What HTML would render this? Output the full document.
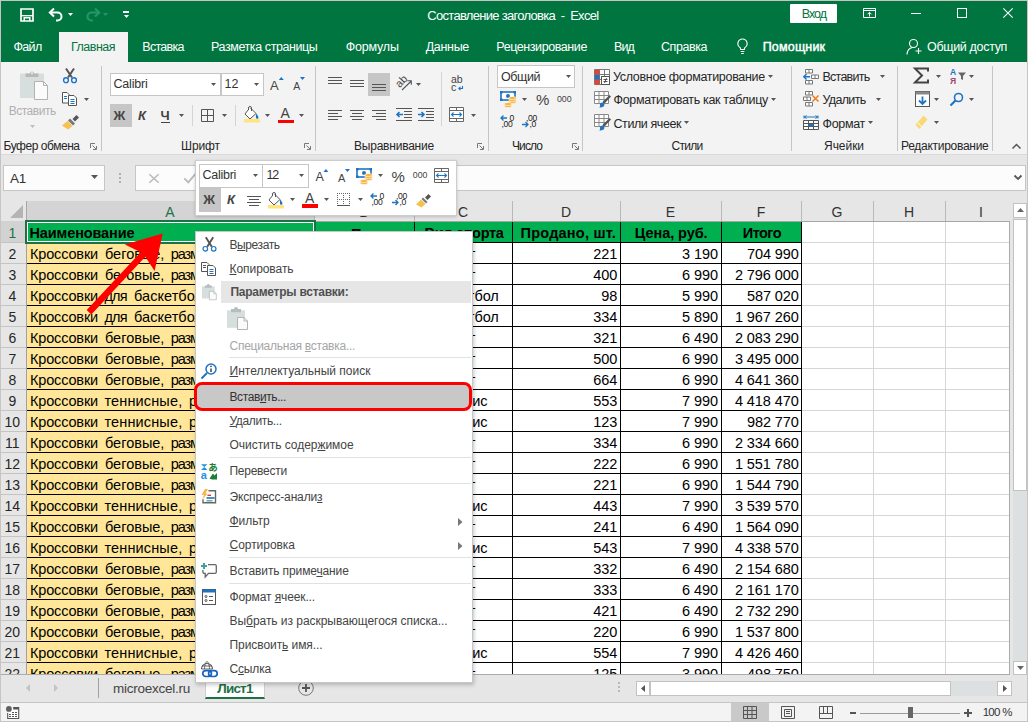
<!DOCTYPE html>
<html lang="ru"><head><meta charset="utf-8"><title>Составление заголовка - Excel</title>
<style>
*{box-sizing:border-box;margin:0;padding:0}
html,body{width:1028px;height:722px;overflow:hidden}
body{position:relative;background:#e6e6e6;font-family:"Liberation Sans",sans-serif;font-size:12px;color:#262626}
.a{position:absolute}
.t{position:absolute;white-space:nowrap;line-height:1}
svg{position:absolute;overflow:visible}
u{text-decoration:underline;text-underline-offset:1px}
#tb{left:0;top:0;width:1028px;height:62px;background:#00753f}
#tb .t{color:#fff;font-size:13px}
#rb{left:0;top:62px;width:1028px;height:92px;background:#f3f3f3}
.sep{position:absolute;width:1px;background:#c6c6c6}
.gl{position:absolute;white-space:nowrap;line-height:1;font-size:12px;color:#333;letter-spacing:.3px}
.dd{position:absolute;width:0;height:0;border-left:3px solid transparent;border-right:3px solid transparent;border-top:3px solid #555}
.box{position:absolute;background:#fff;border:1px solid #c6c6c6}
</style></head><body>
<div id="tb" class="a"><div class="a" style="left:0;top:0;width:1028px;height:1px;background:#c9c3c3"></div><div class="a" style="left:0;top:0;width:1px;height:62px;background:#c9c3c3"></div><svg style="left:20px;top:8px" width="14" height="14" viewBox="0 0 14 14"><path d="M1 1h12v12h-12z" fill="none" stroke="#fff" stroke-width="1.700"/><path d="M1 7.700h12" stroke="#fff" stroke-width="1.300"/><path d="M4.200 13v-3.200h5.600v3.200" fill="none" stroke="#fff" stroke-width="1.500"/></svg><svg style="left:48px;top:7px" width="16" height="15" viewBox="0 0 16 15"><path d="M2 5.500h7.500a4 4 0 0 1 0 8h-1.500" fill="none" stroke="#fff" stroke-width="2"/><path d="M6 1.500l-4.200 4 4.200 4" fill="none" stroke="#fff" stroke-width="2"/></svg><svg style="left:68px;top:13px" width="5" height="3"><path d="M0 0h5l-2.5 3z" fill="#fff"/></svg><svg style="left:85px;top:7px" width="16" height="15" viewBox="0 0 16 15"><path d="M14 5.500h-7.500a4 4 0 0 0 0 8h1.500" fill="none" stroke="#27966a" stroke-width="2.200"/><path d="M10 1.500l4.200 4-4.200 4" fill="none" stroke="#27966a" stroke-width="2.200"/></svg><svg style="left:103px;top:13px" width="5" height="3"><path d="M0 0h5l-2.5 3z" fill="#27966a"/></svg><div class="a" style="left:123px;top:11px;width:6px;height:2px;background:#fff"></div><svg style="left:124px;top:15px" width="5" height="3"><path d="M0 0h5l-2.5 3z" fill="#fff"/></svg><div class="t" style="left:427.3px;top:8.7px;font-size:13px;letter-spacing:-0.71px;color:#fff;white-space:pre;">Составление заголовка  -  Excel</div><div class="a" style="left:790px;top:4px;width:47px;height:19px;background:#fff;border-radius:1px"></div><div class="t" style="left:801.7px;top:7.8px;font-size:12.5px;letter-spacing:-0.94px;color:#00753f;">Вход</div><svg style="left:863px;top:8px" width="13" height="10" viewBox="0 0 13 10"><path d="M.500 .500h12v9h-12z M.500 2.500h12" fill="none" stroke="#fff" stroke-width="1"/><path d="M6.500 8.500v-4 M4.500 6.300l2-2 2 2" fill="none" stroke="#fff" stroke-width="1"/></svg><div class="a" style="left:911px;top:13px;width:10px;height:1px;background:#fff"></div><div class="a" style="left:957px;top:8px;width:10px;height:10px;border:1px solid #fff"></div><svg style="left:1003px;top:8px" width="10" height="10" viewBox="0 0 10 10"><path d="M.300 .300l9.400 9.400 M9.700 .300l-9.400 9.400" stroke="#fff" stroke-width="1.100"/></svg><div class="a" style="left:59px;top:32px;width:69px;height:30px;background:#f3f3f3"></div><div class="t" style="left:13.5px;top:40.8px;font-size:12.5px;letter-spacing:-0.68px;color:#fff;">Файл</div><div class="t" style="left:142.3px;top:40.8px;font-size:12.5px;letter-spacing:-0.71px;color:#fff;">Вставка</div><div class="t" style="left:211.0px;top:40.8px;font-size:12.5px;letter-spacing:-0.41px;color:#fff;">Разметка страницы</div><div class="t" style="left:345.7px;top:40.8px;font-size:12.5px;letter-spacing:-0.20px;color:#fff;">Формулы</div><div class="t" style="left:425.7px;top:40.8px;font-size:12.5px;letter-spacing:-0.31px;color:#fff;">Данные</div><div class="t" style="left:496.3px;top:40.8px;font-size:12.5px;letter-spacing:-0.42px;color:#fff;">Рецензирование</div><div class="t" style="left:614.0px;top:40.8px;font-size:12.5px;letter-spacing:-0.87px;color:#fff;">Вид</div><div class="t" style="left:661.0px;top:40.8px;font-size:12.5px;letter-spacing:-0.43px;color:#fff;">Справка</div><div class="t" style="left:71.0px;top:40.8px;font-size:12.5px;letter-spacing:-0.51px;color:#00753f;">Главная</div><svg style="left:736px;top:38px" width="13" height="17" viewBox="0 0 13 17"><path d="M6.5 1a4.6 4.6 0 0 0-2.6 8.4c.6.6.8 1.3.8 2.1h3.6c0-.8.2-1.5.8-2.1A4.6 4.6 0 0 0 6.500 1z M4.700 13.500h3.600 M5.200 15.500h2.600" fill="none" stroke="#fff" stroke-width="1.1"/></svg><div class="t" style="left:762.7px;top:40.8px;font-size:12.5px;letter-spacing:0.18px;color:#fff;-webkit-text-stroke:.45px #fff;">Помощник</div><svg style="left:905px;top:38px" width="18" height="18" viewBox="0 0 18 18"><circle cx="8.500" cy="5.500" r="4" fill="none" stroke="#fff" stroke-width="1.1"/><path d="M2 16.500c.3-4 2.500-6.500 5.500-7" fill="none" stroke="#fff" stroke-width="1.100"/><path d="M13.500 10v6 M10.500 13h6" stroke="#fff" stroke-width="1.100"/></svg><div class="t" style="left:927.0px;top:40.8px;font-size:12.5px;letter-spacing:-0.33px;color:#fff;">Общий доступ</div></div>
<div id="rb" class="a"></div>
<div class="a" style="left:0;top:154px;width:1028px;height:1px;background:#d9d9d9"></div>
<div class="a" style="left:0;top:62px;width:1px;height:660px;background:#c9c3c3"></div><div class="sep" style="left:101px;top:66px;height:85px"></div><div class="sep" style="left:315px;top:66px;height:85px"></div><div class="sep" style="left:488px;top:66px;height:85px"></div><div class="sep" style="left:582px;top:66px;height:85px"></div><div class="sep" style="left:791px;top:66px;height:85px"></div><div class="sep" style="left:897px;top:66px;height:85px"></div><div class="sep" style="left:992px;top:66px;height:85px"></div><svg style="left:20px;top:70px" width="28" height="30" viewBox="0 0 28 30"><path d="M0 3.500h24v24.500H0z" fill="#d6dede"/><path d="M5.500 3.500h4.500a2 2 0 0 1 4 0h4.500v3.500h-13z" fill="#b7b9b9"/><circle cx="12" cy="3.300" r="1" fill="#f3f3f3"/><path d="M14.500 11.500h9l4 4v14h-13z" fill="#fbfbfb" stroke="#b2b2b2"/><path d="M23.500 11.500v4h4" fill="none" stroke="#b2b2b2"/></svg><div class="t" style="left:8.7px;top:105.0px;font-size:12px;letter-spacing:-0.48px;color:#b0b0b0;">Вставить</div><svg style="left:30px;top:125px" width="5" height="3"><path d="M0 0h5l-2.5 3z" fill="#bdbdbd"/></svg><svg style="left:62px;top:68px" width="16" height="16" viewBox="0 0 16 16"><path d="M4 .500l6 9 M12 .500l-6 9" stroke="#555" stroke-width="2" fill="none"/><circle cx="4" cy="12.200" r="2.400" fill="none" stroke="#1e74c4" stroke-width="1.400"/><circle cx="12" cy="12.200" r="2.400" fill="none" stroke="#1e74c4" stroke-width="1.400"/></svg><svg style="left:62px;top:92px" width="16" height="15" viewBox="0 0 16 15"><path d="M.500 .500h4.500l2 2v8.500h-6.500z" fill="#fff" stroke="#555"/><path d="M2 4.500h3 M2 6.500h3" stroke="#1e74c4"/><path d="M6.500 3.500h5.500l2.500 2.500v7.500h-8z" fill="#fff" stroke="#555"/><path d="M8.500 7.500h4 M8.500 9.500h4 M8.500 11.500h4" stroke="#1e74c4"/></svg><svg style="left:84px;top:98px" width="5" height="3"><path d="M0 0h5l-2.5 3z" fill="#555"/></svg><svg style="left:62px;top:114px" width="17" height="16" viewBox="0 0 17 16"><path d="M10.500 5l4-4 2.500 2.500-4 4z" fill="#555"/><path d="M8 4.500l5 5-2 2-5-5z" fill="#777"/><path d="M5.500 7l5 5-4.500 3.500-6-4z" fill="#f7c04f"/></svg><div class="t" style="left:3.5px;top:140.0px;font-size:12px;letter-spacing:-0.46px;color:#262626;">Буфер обмена</div><svg style="left:90px;top:143px" width="7" height="7" viewBox="0 0 7 7"><path d="M.500 5v-4.500h4.500" fill="none" stroke="#777"/><path d="M2.500 2.500l3.500 3.500 M6.500 3v3.500h-3.500" fill="none" stroke="#777"/></svg><div class="box" style="left:110px;top:73px;width:111px;height:23px"></div><div class="box" style="left:221px;top:73px;width:43px;height:23px"></div><div class="t" style="left:113.5px;top:78.2px;font-size:12.5px;letter-spacing:-0.20px;color:#333;">Calibri</div><svg style="left:211px;top:83px" width="5" height="3"><path d="M0 0h5l-2.5 3z" fill="#555"/></svg><div class="t" style="left:224.5px;top:78.2px;font-size:12.5px;color:#333;">12</div><svg style="left:254px;top:83px" width="5" height="3"><path d="M0 0h5l-2.5 3z" fill="#555"/></svg><svg style="left:0px;top:0px" width="1" height="1" viewBox="0 0 1 1"><text x="270.1" y="89.8" font-size="13" fill="#444" font-family="Liberation Sans,sans-serif">A</text><path d="M278.8 80l2.500-3 2.500 3z" fill="#1e74c4"/></svg><svg style="left:0px;top:0px" width="1" height="1" viewBox="0 0 1 1"><text x="293.3" y="89.8" font-size="10.5" fill="#444" font-family="Liberation Sans,sans-serif">A</text><path d="M300 77h5l-2.500 3z" fill="#1e74c4"/></svg><div class="a" style="left:110px;top:104px;width:22px;height:23px;background:#c6c6c6"></div><div class="t" style="left:113.5px;top:109.0px;font-size:13px;color:#444;font-weight:bold;">Ж</div><div class="t" style="left:138.0px;top:109.0px;font-size:13px;color:#444;font-weight:bold;font-style:italic;">К</div><div class="t" style="left:160.5px;top:109.0px;font-size:13px;color:#444;font-weight:bold;border-bottom:1px solid #444;padding-bottom:0px">Ч</div><svg style="left:179px;top:114px" width="5" height="3"><path d="M0 0h5l-2.5 3z" fill="#555"/></svg><div class="sep" style="left:192px;top:105px;height:21px;background:#d4d4d4"></div><svg style="left:201px;top:109px" width="13" height="13" viewBox="0 0 13 13"><path d="M.500 .500h12v12h-12z M6.500 .500v12 M.500 6.500h12" fill="none" stroke="#555"/></svg><svg style="left:222px;top:114px" width="5" height="3"><path d="M0 0h5l-2.5 3z" fill="#555"/></svg><div class="sep" style="left:235px;top:105px;height:21px;background:#d4d4d4"></div><svg style="left:243.5px;top:106px" width="16" height="17" viewBox="0 0 16 17"><path d="M4.500 3.500l-3.500 4.500 5 5 6-5.500-5.500-5.500" fill="#fff" stroke="#555"/><path d="M4.500 4v-2a1.500 1.500 0 0 1 3 0v3" fill="none" stroke="#555"/><path d="M12 7.500c1.500 1.500 2.500 3 2.500 4a1.300 1.300 0 0 1-2.600 0c0-1 .100-2.500.100-4z" fill="#1e74c4"/><rect x="0" y="13" width="16" height="3.500" fill="#ffe57e"/></svg><svg style="left:265px;top:114px" width="5" height="3"><path d="M0 0h5l-2.5 3z" fill="#555"/></svg><div class="t" style="left:280.5px;top:106.0px;font-size:14px;color:#444;">A</div><div class="a" style="left:277.5px;top:119.5px;width:16px;height:3.500px;background:#ff0000"></div><svg style="left:299px;top:114px" width="5" height="3"><path d="M0 0h5l-2.5 3z" fill="#555"/></svg><div class="t" style="left:181.0px;top:140.0px;font-size:12px;letter-spacing:-0.10px;color:#262626;">Шрифт</div><svg style="left:304px;top:143px" width="7" height="7" viewBox="0 0 7 7"><path d="M.500 5v-4.500h4.500" fill="none" stroke="#777"/><path d="M2.500 2.500l3.500 3.500 M6.500 3v3.500h-3.500" fill="none" stroke="#777"/></svg><svg style="left:328px;top:76.5px" width="14" height="9" viewBox="0 0 14 9"><rect x="0" y="0" width="14" height="1" fill="#555"/><rect x="0" y="3" width="14" height="1" fill="#555"/><rect x="0" y="6" width="14" height="1" fill="#555"/></svg><svg style="left:350px;top:79.5px" width="14" height="9" viewBox="0 0 14 9"><rect x="0" y="0" width="14" height="1" fill="#555"/><rect x="0" y="3" width="14" height="1" fill="#555"/><rect x="0" y="6" width="14" height="1" fill="#555"/></svg><div class="a" style="left:368px;top:73px;width:22px;height:23px;background:#c6c6c6"></div><svg style="left:372px;top:84px" width="14" height="9" viewBox="0 0 14 9"><rect x="0" y="0" width="14" height="1" fill="#555"/><rect x="0" y="3" width="14" height="1" fill="#555"/><rect x="0" y="6" width="14" height="1" fill="#555"/></svg><svg style="left:394px;top:72px" width="22" height="22" viewBox="0 0 22 22"><text x="0" y="0" font-size="11" fill="#444" font-family="Liberation Sans,sans-serif" transform="translate(5.800 16.300) rotate(-47)">ab</text><path d="M8 18l9.300-9 M13.300 8.700h4v4" fill="none" stroke="#555" stroke-width="1.100"/></svg><svg style="left:416px;top:83px" width="5" height="3"><path d="M0 0h5l-2.5 3z" fill="#555"/></svg><div class="sep" style="left:441px;top:72px;height:54px;background:#d4d4d4"></div><svg style="left:450.5px;top:74px" width="14" height="18" viewBox="0 0 14 18"><text x="0" y="9.300" font-size="10.500" fill="#444" font-family="Liberation Sans,sans-serif">ab</text><text x="0" y="16.600" font-size="10.500" fill="#444" font-family="Liberation Sans,sans-serif">c</text><path d="M11.500 12v2.500h-3.500 M9.500 12.800l-1.700 1.700 1.700 1.700" fill="none" stroke="#1e74c4" stroke-width="1.100"/></svg><svg style="left:328px;top:110px" width="14" height="12" viewBox="0 0 14 12"><rect x="0" y="0" width="14" height="1" fill="#555"/><rect x="0" y="3" width="10" height="1" fill="#555"/><rect x="0" y="6" width="14" height="1" fill="#555"/><rect x="0" y="9" width="10" height="1" fill="#555"/></svg><svg style="left:350px;top:110px" width="14" height="12" viewBox="0 0 14 12"><rect x="0" y="0" width="14" height="1" fill="#555"/><rect x="2" y="3" width="10" height="1" fill="#555"/><rect x="0" y="6" width="14" height="1" fill="#555"/><rect x="2" y="9" width="10" height="1" fill="#555"/></svg><svg style="left:372px;top:110px" width="14" height="12" viewBox="0 0 14 12"><rect x="0" y="0" width="14" height="1" fill="#555"/><rect x="4" y="3" width="10" height="1" fill="#555"/><rect x="0" y="6" width="14" height="1" fill="#555"/><rect x="4" y="9" width="10" height="1" fill="#555"/></svg><svg style="left:396px;top:108px" width="16" height="13" viewBox="0 0 16 13"><rect x="0" y="0" width="16" height="1" fill="#555"/><rect x="8" y="3" width="8" height="1" fill="#555"/><rect x="8" y="6" width="8" height="1" fill="#555"/><rect x="8" y="9" width="8" height="1" fill="#555"/><rect x="0" y="12" width="16" height="1" fill="#555"/><path d="M7 6.500h-6 M3.500 4l-2.500 2.500 2.500 2.500" fill="none" stroke="#1e74c4" stroke-width="1.600"/></svg><svg style="left:418px;top:108px" width="16" height="13" viewBox="0 0 16 13"><rect x="0" y="0" width="16" height="1" fill="#555"/><rect x="8" y="3" width="8" height="1" fill="#555"/><rect x="8" y="6" width="8" height="1" fill="#555"/><rect x="8" y="9" width="8" height="1" fill="#555"/><rect x="0" y="12" width="16" height="1" fill="#555"/><path d="M0 6.500h6 M3.500 4l2.500 2.500-2.500 2.500" fill="none" stroke="#1e74c4" stroke-width="1.600"/></svg><svg style="left:449px;top:107px" width="16" height="16" viewBox="0 0 16 16"><path d="M.500 .500h14v14h-14z" fill="#fff" stroke="#666"/><path d="M.500 3.500h14 M.500 11.500h14 M7.500 .500v3 M7.500 11.500v3" fill="none" stroke="#666"/><path d="M2.500 7.500h10 M4.500 5.500l-2 2 2 2 M10.500 5.500l2 2-2 2" fill="none" stroke="#1e74c4" stroke-width="1.100"/></svg><svg style="left:471px;top:114px" width="5" height="3"><path d="M0 0h5l-2.5 3z" fill="#555"/></svg><div class="t" style="left:354.0px;top:140.0px;font-size:12px;letter-spacing:-0.22px;color:#262626;">Выравнивание</div><svg style="left:477px;top:143px" width="7" height="7" viewBox="0 0 7 7"><path d="M.500 5v-4.500h4.500" fill="none" stroke="#777"/><path d="M2.500 2.500l3.500 3.500 M6.500 3v3.500h-3.500" fill="none" stroke="#777"/></svg><div class="box" style="left:497px;top:65px;width:78px;height:23px"></div><div class="t" style="left:501.0px;top:71.0px;font-size:12.5px;letter-spacing:-0.43px;color:#333;">Общий</div><svg style="left:566px;top:75px" width="5" height="3"><path d="M0 0h5l-2.5 3z" fill="#555"/></svg><svg style="left:500px;top:90.5px" width="17" height="17" viewBox="0 0 17 17"><rect x="1" y="1" width="14" height="8" fill="#fff" stroke="#1e74c4" stroke-width="1.600"/><circle cx="8" cy="5" r="2" fill="#1e74c4"/><rect x="0" y="0" width="2.500" height="2.500" fill="#1e74c4"/><rect x="13.500" y="0" width="2.500" height="2.500" fill="#1e74c4"/><rect x="0" y="7.500" width="2.500" height="2.500" fill="#1e74c4"/><g fill="#f7b23b" stroke="#fff" stroke-width=".600"><ellipse cx="12.500" cy="11" rx="3.800" ry="1.500"/><ellipse cx="12.500" cy="9" rx="3.800" ry="1.500"/><ellipse cx="12.500" cy="7" rx="3.800" ry="1.500"/><ellipse cx="8" cy="15" rx="3.800" ry="1.500"/><ellipse cx="8" cy="13" rx="3.800" ry="1.500"/></g></svg><svg style="left:522px;top:98px" width="5" height="3"><path d="M0 0h5l-2.5 3z" fill="#555"/></svg><div class="t" style="left:536.0px;top:92.0px;font-size:15px;color:#444;">%</div><div class="t" style="left:557.0px;top:94.6px;font-size:8.8px;letter-spacing:-0.06px;color:#444;">000</div><svg style="left:500px;top:115px" width="15" height="14" viewBox="0 0 15 14"><text x="9.500" y="5.800" font-size="8.600" letter-spacing="-.35" fill="#222" font-family="Liberation Sans,sans-serif">0</text><text x="1.500" y="12.400" font-size="8.600" letter-spacing="-.35" fill="#222" font-family="Liberation Sans,sans-serif">,00</text><path d="M7 3h-6 M3.500 .500l-2.500 2.500 2.500 2.500" fill="none" stroke="#1e74c4" stroke-width="1.300"/></svg><svg style="left:522px;top:115px" width="15" height="14" viewBox="0 0 15 14"><text x="4" y="5.800" font-size="8.600" letter-spacing="-.35" fill="#222" font-family="Liberation Sans,sans-serif">,00</text><text x="7.500" y="12.400" font-size="8.600" letter-spacing="-.35" fill="#222" font-family="Liberation Sans,sans-serif">,0</text><path d="M0 9.500h6 M3.500 7l2.500 2.500-2.500 2.500" fill="none" stroke="#1e74c4" stroke-width="1.300"/></svg><div class="t" style="left:512.0px;top:140.0px;font-size:12px;letter-spacing:-0.90px;color:#262626;">Число</div><svg style="left:572px;top:143px" width="7" height="7" viewBox="0 0 7 7"><path d="M.500 5v-4.500h4.500" fill="none" stroke="#777"/><path d="M2.500 2.500l3.500 3.500 M6.500 3v3.500h-3.500" fill="none" stroke="#777"/></svg><svg style="left:594px;top:68.5px" width="16" height="16" viewBox="0 0 16 16"><path d="M.500 .500h15v15h-15z M.500 5.500h15 M.500 10.500h15 M5.500 .500v15 M10.500 .500v15" fill="#fff" stroke="#777"/><rect x="1" y="1" width="4.500" height="4.500" fill="#e8412f"/><rect x="1" y="6" width="4.500" height="4.500" fill="#1e74c4"/><rect x="1" y="11" width="4.500" height="4.500" fill="#e8412f"/><rect x="7.500" y="7.500" width="8" height="8" fill="#fff" stroke="#555"/><path d="M9.500 10.500h4 M9.500 12.500h4 M12.500 9l-2 5" stroke="#444" stroke-width=".900"/></svg><div class="t" style="left:613.0px;top:71.2px;font-size:12.5px;letter-spacing:-0.31px;color:#262626;">Условное форматирование</div><svg style="left:768px;top:75px" width="5" height="3"><path d="M0 0h5l-2.5 3z" fill="#555"/></svg><svg style="left:594px;top:91px" width="17" height="17" viewBox="0 0 17 17"><path d="M.500 .500h14v12h-14z M.500 4.500h14 M.500 8.500h14 M5 .500v12 M10 .500v12" fill="#fff" stroke="#888"/><path d="M15.500 4l1.500 1.500-6 6.500-2.500 1 .500-2.500z" fill="#555"/><path d="M8.500 11.500c-2 0-3 1.500-2.500 3 .300 1.500-1 2-1 2 3 .500 5.500-1 5.500-3z" fill="#1e74c4"/></svg><div class="t" style="left:613.5px;top:94.2px;font-size:12.5px;letter-spacing:-0.33px;color:#262626;">Форматировать как таблицу</div><svg style="left:771px;top:98px" width="5" height="3"><path d="M0 0h5l-2.5 3z" fill="#555"/></svg><svg style="left:594px;top:114px" width="17" height="17" viewBox="0 0 17 17"><path d="M.500 .500h14v12h-14z M.500 4.500h14 M.500 8.500h14 M5 .500v12 M10 .500v12" fill="#fff" stroke="#888"/><path d="M15.500 4l1.500 1.500-6 6.500-2.500 1 .500-2.500z" fill="#555"/><path d="M8.500 11.500c-2 0-3 1.500-2.500 3 .300 1.500-1 2-1 2 3 .500 5.500-1 5.500-3z" fill="#1e74c4"/></svg><div class="t" style="left:613.5px;top:117.8px;font-size:12.5px;letter-spacing:-0.42px;color:#262626;">Стили ячеек</div><svg style="left:684px;top:121px" width="5" height="3"><path d="M0 0h5l-2.5 3z" fill="#555"/></svg><div class="t" style="left:671.5px;top:140.0px;font-size:12px;letter-spacing:-0.71px;color:#262626;">Стили</div><svg style="left:803px;top:68.5px" width="16" height="16" viewBox="0 0 16 16"><path d="M2.500 .500h7v3.500h-7z M2.500 11.500h7v3.500h-7z M8.500 6h7v3.500h-7z M6 .500v3.500 M6 11.500v3.500 M12 6v3.500" fill="#fff" stroke="#777"/><path d="M7 7.700h-6 M3.500 5l-2.700 2.700 2.700 2.700" fill="none" stroke="#1e74c4" stroke-width="1.400"/></svg><div class="t" style="left:822.5px;top:71.2px;font-size:12.5px;letter-spacing:-0.75px;color:#262626;">Вставить</div><svg style="left:880px;top:75px" width="5" height="3"><path d="M0 0h5l-2.5 3z" fill="#555"/></svg><svg style="left:803px;top:91px" width="16" height="16" viewBox="0 0 16 16"><path d="M2.500 .500h7v3.500h-7z M2.500 11.500h7v3.500h-7z M.500 6h7v3.500h-7z M6 .500v3.500 M6 11.500v3.500 M4 6v3.500" fill="#fff" stroke="#777"/><path d="M9.500 4.500l6 6 M15.500 4.500l-6 6" stroke="#f07c1c" stroke-width="1.500"/></svg><div class="t" style="left:822.5px;top:94.2px;font-size:12.5px;letter-spacing:-0.67px;color:#262626;">Удалить</div><svg style="left:876px;top:98px" width="5" height="3"><path d="M0 0h5l-2.5 3z" fill="#555"/></svg><svg style="left:803px;top:113.5px" width="16" height="17" viewBox="0 0 16 17"><path d="M1 1.500v3 M15 1.500v3 M1 3h14 M3.500 1.500l-2 1.500 2 1.500 M12.500 1.500l2 1.500-2 1.500" fill="none" stroke="#1e74c4"/><path d="M.500 6.500h15v9h-15z M.500 9.500h15 M.500 12.500h15 M5.500 6.500v9 M10.500 6.500v9" fill="#fff" stroke="#555"/><rect x="6" y="10" width="4.500" height="2.500" fill="#1e74c4"/></svg><div class="t" style="left:822.5px;top:117.8px;font-size:12.5px;letter-spacing:-0.32px;color:#262626;">Формат</div><svg style="left:868px;top:121px" width="5" height="3"><path d="M0 0h5l-2.5 3z" fill="#555"/></svg><div class="t" style="left:824.0px;top:140.0px;font-size:12px;letter-spacing:-0.04px;color:#262626;">Ячейки</div><svg style="left:914px;top:68px" width="15" height="15" viewBox="0 0 15 15"><path d="M14 3.500v-3h-13l7 7-7 7h13v-3" fill="none" stroke="#444" stroke-width="2"/></svg><svg style="left:936px;top:75px" width="5" height="3"><path d="M0 0h5l-2.5 3z" fill="#555"/></svg><svg style="left:950px;top:68px" width="16" height="16" viewBox="0 0 16 16"><text x="0" y="7" font-size="8.500" font-weight="bold" fill="#1e74c4" font-family="Liberation Sans,sans-serif">А</text><text x="0" y="15.500" font-size="8.500" font-weight="bold" fill="#a0466e" font-family="Liberation Sans,sans-serif">Я</text><path d="M8 4.500h8l-3 3.500v4l-2-1v-3z" fill="#666"/></svg><svg style="left:969px;top:75px" width="5" height="3"><path d="M0 0h5l-2.5 3z" fill="#555"/></svg><svg style="left:914.5px;top:91px" width="15" height="16" viewBox="0 0 15 16"><rect x=".500" y=".500" width="14" height="15" fill="#fff" stroke="#555"/><rect x=".500" y=".500" width="14" height="3" fill="#888"/><path d="M7.500 5.500v7 M4 9.500l3.500 3.500 3.500-3.500" fill="none" stroke="#1e74c4" stroke-width="1.800"/></svg><svg style="left:934px;top:98px" width="5" height="3"><path d="M0 0h5l-2.5 3z" fill="#555"/></svg><svg style="left:950px;top:92px" width="14" height="14" viewBox="0 0 14 14"><circle cx="8.500" cy="5.500" r="4" fill="none" stroke="#1e74c4" stroke-width="1.600"/><path d="M5.500 8.500l-5 5" stroke="#1e74c4" stroke-width="2.200"/></svg><svg style="left:969px;top:98px" width="5" height="3"><path d="M0 0h5l-2.5 3z" fill="#555"/></svg><svg style="left:915px;top:115px" width="13" height="15" viewBox="0 0 13 15"><path d="M8.500 .500l4 4-8 9.500-4-4z" fill="#f9d876"/><path d="M3 8l3.500 3.500" stroke="#fff"/></svg><svg style="left:934px;top:121px" width="5" height="3"><path d="M0 0h5l-2.5 3z" fill="#555"/></svg><div class="t" style="left:901.0px;top:140.0px;font-size:12px;letter-spacing:-0.28px;color:#262626;">Редактирование</div><svg style="left:1012px;top:143px" width="9" height="6" viewBox="0 0 9 6"><path d="M.500 5.500l4-4 4 4" fill="none" stroke="#555" stroke-width="1.500"/></svg>
<div class="box" style="left:3px;top:165px;width:102px;height:26px;background:#fcfcfc"></div><div class="t" style="left:10.0px;top:171.6px;font-size:13.5px;letter-spacing:-0.26px;color:#333;">A1</div><svg style="left:91px;top:175px" width="7" height="4"><path d="M0 0h7l-3.5 4z" fill="#555"/></svg><div class="a" style="left:119px;top:173px;width:2px;height:2px;background:#b0b0b0"></div><div class="a" style="left:119px;top:177px;width:2px;height:2px;background:#b0b0b0"></div><div class="a" style="left:119px;top:181px;width:2px;height:2px;background:#b0b0b0"></div><div class="box" style="left:135px;top:165px;width:891px;height:26px;background:#fcfcfc"></div><svg style="left:149px;top:173.5px" width="10" height="9" viewBox="0 0 10 9"><path d="M.300 .300l9.400 8.400 M9.700 .300l-9.400 8.400" stroke="#b9b9b9" stroke-width="1.500"/></svg><svg style="left:184px;top:172px" width="13" height="11" viewBox="0 0 13 11"><path d="M.300 6.300l4 4 8-9.500" fill="none" stroke="#b9b9b9" stroke-width="1.800"/></svg><svg style="left:1014px;top:175px" width="8" height="6" viewBox="0 0 8 6"><path d="M.5 .5l3.500 3.500 3.500-3.500" fill="none" stroke="#555" stroke-width="1.800"/></svg><div class="a" style="left:1px;top:201px;width:1009px;height:474px;background:#fff;overflow:hidden"><div class="a" style="left:0;top:0;width:1009px;height:21px;background:#e6e6e6;border-bottom:1px solid #a6a6a6"></div><div class="a" style="left:0;top:0;width:26px;height:474px;background:#e6e6e6;border-right:1px solid #a0a0a4"></div><div class="a" style="left:26px;top:0;width:287px;height:20px;background:#d4d4d4"></div><div class="a" style="left:25px;top:0;width:1px;height:20px;background:#a8a8a8"></div><div class="a" style="left:0;top:20px;width:25px;height:22px;background:#d2d2d2"></div><svg style="left:9px;top:4px" width="13" height="13" viewBox="0 0 13 13"><path d="M13 0v13h-13z" fill="#b4b4b4"/></svg><div class="t" style="left:25px;top:4px;width:288px;text-align:center;font-size:14px;color:#217346">A</div><div class="a" style="left:313px;top:0;width:1px;height:20px;background:#b9b9b9"></div><div class="t" style="left:313px;top:4px;width:100px;text-align:center;font-size:14px;color:#333">B</div><div class="a" style="left:413px;top:0;width:1px;height:20px;background:#b9b9b9"></div><div class="t" style="left:413px;top:4px;width:98px;text-align:center;font-size:14px;color:#333">C</div><div class="a" style="left:511px;top:0;width:1px;height:20px;background:#b9b9b9"></div><div class="t" style="left:511px;top:4px;width:108px;text-align:center;font-size:14px;color:#333">D</div><div class="a" style="left:619px;top:0;width:1px;height:20px;background:#b9b9b9"></div><div class="t" style="left:619px;top:4px;width:101px;text-align:center;font-size:14px;color:#333">E</div><div class="a" style="left:720px;top:0;width:1px;height:20px;background:#b9b9b9"></div><div class="t" style="left:720px;top:4px;width:80px;text-align:center;font-size:14px;color:#333">F</div><div class="a" style="left:800px;top:0;width:1px;height:20px;background:#b9b9b9"></div><div class="t" style="left:800px;top:4px;width:72px;text-align:center;font-size:14px;color:#333">G</div><div class="a" style="left:872px;top:0;width:1px;height:20px;background:#b9b9b9"></div><div class="t" style="left:872px;top:4px;width:72px;text-align:center;font-size:14px;color:#333">H</div><div class="a" style="left:944px;top:0;width:1px;height:20px;background:#b9b9b9"></div><div class="t" style="left:944px;top:4px;width:72px;text-align:center;font-size:14px;color:#333">I</div><div class="a" style="left:800px;top:21px;width:1px;height:453px;background:#d6d6d6"></div><div class="a" style="left:872px;top:21px;width:1px;height:453px;background:#d6d6d6"></div><div class="a" style="left:944px;top:21px;width:1px;height:453px;background:#d6d6d6"></div><div class="a" style="left:1016px;top:21px;width:1px;height:453px;background:#d6d6d6"></div><div class="a" style="left:800px;top:41px;width:209px;height:1px;background:#d6d6d6"></div><div class="a" style="left:0;top:41px;width:25px;height:1px;background:#c4c4c4"></div><div class="a" style="left:800px;top:62px;width:209px;height:1px;background:#d6d6d6"></div><div class="a" style="left:0;top:62px;width:25px;height:1px;background:#c4c4c4"></div><div class="a" style="left:800px;top:83px;width:209px;height:1px;background:#d6d6d6"></div><div class="a" style="left:0;top:83px;width:25px;height:1px;background:#c4c4c4"></div><div class="a" style="left:800px;top:104px;width:209px;height:1px;background:#d6d6d6"></div><div class="a" style="left:0;top:104px;width:25px;height:1px;background:#c4c4c4"></div><div class="a" style="left:800px;top:125px;width:209px;height:1px;background:#d6d6d6"></div><div class="a" style="left:0;top:125px;width:25px;height:1px;background:#c4c4c4"></div><div class="a" style="left:800px;top:146px;width:209px;height:1px;background:#d6d6d6"></div><div class="a" style="left:0;top:146px;width:25px;height:1px;background:#c4c4c4"></div><div class="a" style="left:800px;top:167px;width:209px;height:1px;background:#d6d6d6"></div><div class="a" style="left:0;top:167px;width:25px;height:1px;background:#c4c4c4"></div><div class="a" style="left:800px;top:188px;width:209px;height:1px;background:#d6d6d6"></div><div class="a" style="left:0;top:188px;width:25px;height:1px;background:#c4c4c4"></div><div class="a" style="left:800px;top:209px;width:209px;height:1px;background:#d6d6d6"></div><div class="a" style="left:0;top:209px;width:25px;height:1px;background:#c4c4c4"></div><div class="a" style="left:800px;top:230px;width:209px;height:1px;background:#d6d6d6"></div><div class="a" style="left:0;top:230px;width:25px;height:1px;background:#c4c4c4"></div><div class="a" style="left:800px;top:251px;width:209px;height:1px;background:#d6d6d6"></div><div class="a" style="left:0;top:251px;width:25px;height:1px;background:#c4c4c4"></div><div class="a" style="left:800px;top:272px;width:209px;height:1px;background:#d6d6d6"></div><div class="a" style="left:0;top:272px;width:25px;height:1px;background:#c4c4c4"></div><div class="a" style="left:800px;top:293px;width:209px;height:1px;background:#d6d6d6"></div><div class="a" style="left:0;top:293px;width:25px;height:1px;background:#c4c4c4"></div><div class="a" style="left:800px;top:314px;width:209px;height:1px;background:#d6d6d6"></div><div class="a" style="left:0;top:314px;width:25px;height:1px;background:#c4c4c4"></div><div class="a" style="left:800px;top:335px;width:209px;height:1px;background:#d6d6d6"></div><div class="a" style="left:0;top:335px;width:25px;height:1px;background:#c4c4c4"></div><div class="a" style="left:800px;top:356px;width:209px;height:1px;background:#d6d6d6"></div><div class="a" style="left:0;top:356px;width:25px;height:1px;background:#c4c4c4"></div><div class="a" style="left:800px;top:377px;width:209px;height:1px;background:#d6d6d6"></div><div class="a" style="left:0;top:377px;width:25px;height:1px;background:#c4c4c4"></div><div class="a" style="left:800px;top:398px;width:209px;height:1px;background:#d6d6d6"></div><div class="a" style="left:0;top:398px;width:25px;height:1px;background:#c4c4c4"></div><div class="a" style="left:800px;top:419px;width:209px;height:1px;background:#d6d6d6"></div><div class="a" style="left:0;top:419px;width:25px;height:1px;background:#c4c4c4"></div><div class="a" style="left:800px;top:440px;width:209px;height:1px;background:#d6d6d6"></div><div class="a" style="left:0;top:440px;width:25px;height:1px;background:#c4c4c4"></div><div class="a" style="left:800px;top:461px;width:209px;height:1px;background:#d6d6d6"></div><div class="a" style="left:0;top:461px;width:25px;height:1px;background:#c4c4c4"></div><div class="a" style="left:800px;top:482px;width:209px;height:1px;background:#d6d6d6"></div><div class="a" style="left:0;top:482px;width:25px;height:1px;background:#c4c4c4"></div><div class="a" style="left:26px;top:21px;width:774px;height:21px;background:#00b050"></div><div class="a" style="left:26px;top:42px;width:288px;height:432px;background:#ffe699"></div><div class="a" style="left:313px;top:21px;width:1px;height:453px;background:#000"></div><div class="a" style="left:413px;top:21px;width:1px;height:453px;background:#000"></div><div class="a" style="left:511px;top:21px;width:1px;height:453px;background:#000"></div><div class="a" style="left:619px;top:21px;width:1px;height:453px;background:#000"></div><div class="a" style="left:720px;top:21px;width:1px;height:453px;background:#000"></div><div class="a" style="left:800px;top:21px;width:1px;height:453px;background:#000"></div><div class="a" style="left:26px;top:41px;width:775px;height:1px;background:#000"></div><div class="a" style="left:26px;top:62px;width:775px;height:1px;background:#000"></div><div class="a" style="left:26px;top:83px;width:775px;height:1px;background:#000"></div><div class="a" style="left:26px;top:104px;width:775px;height:1px;background:#000"></div><div class="a" style="left:26px;top:125px;width:775px;height:1px;background:#000"></div><div class="a" style="left:26px;top:146px;width:775px;height:1px;background:#000"></div><div class="a" style="left:26px;top:167px;width:775px;height:1px;background:#000"></div><div class="a" style="left:26px;top:188px;width:775px;height:1px;background:#000"></div><div class="a" style="left:26px;top:209px;width:775px;height:1px;background:#000"></div><div class="a" style="left:26px;top:230px;width:775px;height:1px;background:#000"></div><div class="a" style="left:26px;top:251px;width:775px;height:1px;background:#000"></div><div class="a" style="left:26px;top:272px;width:775px;height:1px;background:#000"></div><div class="a" style="left:26px;top:293px;width:775px;height:1px;background:#000"></div><div class="a" style="left:26px;top:314px;width:775px;height:1px;background:#000"></div><div class="a" style="left:26px;top:335px;width:775px;height:1px;background:#000"></div><div class="a" style="left:26px;top:356px;width:775px;height:1px;background:#000"></div><div class="a" style="left:26px;top:377px;width:775px;height:1px;background:#000"></div><div class="a" style="left:26px;top:398px;width:775px;height:1px;background:#000"></div><div class="a" style="left:26px;top:419px;width:775px;height:1px;background:#000"></div><div class="a" style="left:26px;top:440px;width:775px;height:1px;background:#000"></div><div class="a" style="left:26px;top:461px;width:775px;height:1px;background:#000"></div><div class="a" style="left:26px;top:482px;width:775px;height:1px;background:#000"></div><div class="t" style="left:7.4px;top:24.8px;font-size:14px;color:#217346;">1</div><div class="t" style="left:7.4px;top:45.8px;font-size:14px;color:#262626;">2</div><div class="t" style="left:7.4px;top:66.8px;font-size:14px;color:#262626;">3</div><div class="t" style="left:7.4px;top:87.8px;font-size:14px;color:#262626;">4</div><div class="t" style="left:7.4px;top:108.8px;font-size:14px;color:#262626;">5</div><div class="t" style="left:7.4px;top:129.8px;font-size:14px;color:#262626;">6</div><div class="t" style="left:7.4px;top:150.8px;font-size:14px;color:#262626;">7</div><div class="t" style="left:7.4px;top:171.8px;font-size:14px;color:#262626;">8</div><div class="t" style="left:7.4px;top:192.8px;font-size:14px;color:#262626;">9</div><div class="t" style="left:3.5px;top:213.8px;font-size:14px;color:#262626;">10</div><div class="t" style="left:4.0px;top:234.8px;font-size:14px;color:#262626;">11</div><div class="t" style="left:3.5px;top:255.8px;font-size:14px;color:#262626;">12</div><div class="t" style="left:3.5px;top:276.8px;font-size:14px;color:#262626;">13</div><div class="t" style="left:3.5px;top:297.8px;font-size:14px;color:#262626;">14</div><div class="t" style="left:3.5px;top:318.8px;font-size:14px;color:#262626;">15</div><div class="t" style="left:3.5px;top:339.8px;font-size:14px;color:#262626;">16</div><div class="t" style="left:3.5px;top:360.8px;font-size:14px;color:#262626;">17</div><div class="t" style="left:3.5px;top:381.8px;font-size:14px;color:#262626;">18</div><div class="t" style="left:3.5px;top:402.8px;font-size:14px;color:#262626;">19</div><div class="t" style="left:3.5px;top:423.8px;font-size:14px;color:#262626;">20</div><div class="t" style="left:3.5px;top:444.8px;font-size:14px;color:#262626;">21</div><div class="t" style="left:3.5px;top:465.8px;font-size:14px;color:#262626;">22</div><div class="t" style="left:28.5px;top:24.9px;font-size:14.5px;letter-spacing:-0.12px;color:#000;font-weight:bold;">Наименование</div><div class="t" style="left:349.9px;top:25.9px;font-size:14.5px;color:#000;font-weight:bold;">Пол</div><div class="t" style="left:423.5px;top:24.9px;font-size:14.5px;letter-spacing:-0.31px;color:#000;font-weight:bold;">Вид спорта</div><div class="t" style="left:519.5px;top:24.9px;font-size:14.5px;letter-spacing:0.23px;color:#000;font-weight:bold;">Продано, шт.</div><div class="t" style="left:633.8px;top:24.9px;font-size:14.5px;letter-spacing:-0.07px;color:#000;font-weight:bold;">Цена, руб.</div><div class="t" style="left:741.8px;top:24.9px;font-size:14.5px;letter-spacing:-0.54px;color:#000;font-weight:bold;">Итого</div><div class="t" style="left:29.0px;top:45.9px;font-size:14.5px;color:#000"><span style="letter-spacing:-0.16px">Кроссовки</span><span style="letter-spacing:2.93px"> </span><span style="letter-spacing:-0.01px">беговые,</span><span style="letter-spacing:2.37px"> </span><span style="letter-spacing:-1.15px">размер</span></div><div class="t" style="left:451.7px;top:45.9px;font-size:14.5px;letter-spacing:-0.07px;color:#000;">Бег</div><div class="t" style="left:592.3px;top:45.9px;font-size:14.5px;letter-spacing:-0.07px;color:#000;">221</div><div class="t" style="left:681.0px;top:45.9px;font-size:14.5px;letter-spacing:-0.07px;color:#000;">3 190</div><div class="t" style="left:745.9px;top:45.9px;font-size:14.5px;letter-spacing:-0.07px;color:#000;">704 990</div><div class="t" style="left:29.0px;top:66.9px;font-size:14.5px;color:#000"><span style="letter-spacing:-0.16px">Кроссовки</span><span style="letter-spacing:2.93px"> </span><span style="letter-spacing:-0.01px">беговые,</span><span style="letter-spacing:2.37px"> </span><span style="letter-spacing:-1.15px">размер</span></div><div class="t" style="left:451.7px;top:66.9px;font-size:14.5px;letter-spacing:-0.07px;color:#000;">Бег</div><div class="t" style="left:592.3px;top:66.9px;font-size:14.5px;letter-spacing:-0.07px;color:#000;">400</div><div class="t" style="left:681.0px;top:66.9px;font-size:14.5px;letter-spacing:-0.07px;color:#000;">6 990</div><div class="t" style="left:733.9px;top:66.9px;font-size:14.5px;letter-spacing:-0.06px;color:#000;">2 796 000</div><div class="t" style="left:29.0px;top:87.9px;font-size:14.5px;color:#000"><span style="letter-spacing:-0.16px">Кроссовки</span><span style="letter-spacing:2.33px"> </span><span style="letter-spacing:-0.72px">для</span><span style="letter-spacing:3.07px"> </span><span style="letter-spacing:0.03px">баскетбола</span></div><div class="t" style="left:428.3px;top:87.9px;font-size:14.5px;letter-spacing:-0.07px;color:#000;">Баскетбол</div><div class="t" style="left:600.3px;top:87.9px;font-size:14.5px;letter-spacing:-0.07px;color:#000;">98</div><div class="t" style="left:681.0px;top:87.9px;font-size:14.5px;letter-spacing:-0.07px;color:#000;">5 990</div><div class="t" style="left:745.9px;top:87.9px;font-size:14.5px;letter-spacing:-0.07px;color:#000;">587 020</div><div class="t" style="left:29.0px;top:108.9px;font-size:14.5px;color:#000"><span style="letter-spacing:-0.16px">Кроссовки</span><span style="letter-spacing:2.33px"> </span><span style="letter-spacing:-0.72px">для</span><span style="letter-spacing:3.07px"> </span><span style="letter-spacing:0.03px">баскетбола</span></div><div class="t" style="left:428.3px;top:108.9px;font-size:14.5px;letter-spacing:-0.07px;color:#000;">Баскетбол</div><div class="t" style="left:592.3px;top:108.9px;font-size:14.5px;letter-spacing:-0.07px;color:#000;">334</div><div class="t" style="left:681.0px;top:108.9px;font-size:14.5px;letter-spacing:-0.07px;color:#000;">5 890</div><div class="t" style="left:733.9px;top:108.9px;font-size:14.5px;letter-spacing:-0.06px;color:#000;">1 967 260</div><div class="t" style="left:29.0px;top:129.9px;font-size:14.5px;color:#000"><span style="letter-spacing:-0.16px">Кроссовки</span><span style="letter-spacing:2.93px"> </span><span style="letter-spacing:-0.01px">беговые,</span><span style="letter-spacing:2.37px"> </span><span style="letter-spacing:-1.15px">размер</span></div><div class="t" style="left:451.7px;top:129.9px;font-size:14.5px;letter-spacing:-0.07px;color:#000;">Бег</div><div class="t" style="left:592.3px;top:129.9px;font-size:14.5px;letter-spacing:-0.07px;color:#000;">321</div><div class="t" style="left:681.0px;top:129.9px;font-size:14.5px;letter-spacing:-0.07px;color:#000;">6 490</div><div class="t" style="left:733.9px;top:129.9px;font-size:14.5px;letter-spacing:-0.06px;color:#000;">2 083 290</div><div class="t" style="left:29.0px;top:150.9px;font-size:14.5px;color:#000"><span style="letter-spacing:-0.16px">Кроссовки</span><span style="letter-spacing:2.93px"> </span><span style="letter-spacing:-0.01px">беговые,</span><span style="letter-spacing:2.37px"> </span><span style="letter-spacing:-1.15px">размер</span></div><div class="t" style="left:451.7px;top:150.9px;font-size:14.5px;letter-spacing:-0.07px;color:#000;">Бег</div><div class="t" style="left:592.3px;top:150.9px;font-size:14.5px;letter-spacing:-0.07px;color:#000;">500</div><div class="t" style="left:681.0px;top:150.9px;font-size:14.5px;letter-spacing:-0.07px;color:#000;">6 990</div><div class="t" style="left:733.9px;top:150.9px;font-size:14.5px;letter-spacing:-0.06px;color:#000;">3 495 000</div><div class="t" style="left:29.0px;top:171.9px;font-size:14.5px;color:#000"><span style="letter-spacing:-0.16px">Кроссовки</span><span style="letter-spacing:2.93px"> </span><span style="letter-spacing:-0.01px">беговые,</span><span style="letter-spacing:2.37px"> </span><span style="letter-spacing:-1.15px">размер</span></div><div class="t" style="left:451.7px;top:171.9px;font-size:14.5px;letter-spacing:-0.07px;color:#000;">Бег</div><div class="t" style="left:592.3px;top:171.9px;font-size:14.5px;letter-spacing:-0.07px;color:#000;">664</div><div class="t" style="left:681.0px;top:171.9px;font-size:14.5px;letter-spacing:-0.07px;color:#000;">6 990</div><div class="t" style="left:733.9px;top:171.9px;font-size:14.5px;letter-spacing:-0.06px;color:#000;">4 641 360</div><div class="t" style="left:29.0px;top:192.9px;font-size:14.5px;color:#000"><span style="letter-spacing:-0.16px">Кроссовки</span><span style="letter-spacing:2.33px"> </span><span style="letter-spacing:0.15px">теннисные,</span><span style="letter-spacing:2.64px"> </span><span style="letter-spacing:-1.15px">размер</span></div><div class="t" style="left:439.5px;top:192.9px;font-size:14.5px;letter-spacing:-0.07px;color:#000;">Теннис</div><div class="t" style="left:592.3px;top:192.9px;font-size:14.5px;letter-spacing:-0.07px;color:#000;">553</div><div class="t" style="left:681.0px;top:192.9px;font-size:14.5px;letter-spacing:-0.07px;color:#000;">7 990</div><div class="t" style="left:733.9px;top:192.9px;font-size:14.5px;letter-spacing:-0.06px;color:#000;">4 418 470</div><div class="t" style="left:29.0px;top:213.9px;font-size:14.5px;color:#000"><span style="letter-spacing:-0.16px">Кроссовки</span><span style="letter-spacing:2.33px"> </span><span style="letter-spacing:0.15px">теннисные,</span><span style="letter-spacing:2.64px"> </span><span style="letter-spacing:-1.15px">размер</span></div><div class="t" style="left:439.5px;top:213.9px;font-size:14.5px;letter-spacing:-0.07px;color:#000;">Теннис</div><div class="t" style="left:592.3px;top:213.9px;font-size:14.5px;letter-spacing:-0.07px;color:#000;">123</div><div class="t" style="left:681.0px;top:213.9px;font-size:14.5px;letter-spacing:-0.07px;color:#000;">7 990</div><div class="t" style="left:745.9px;top:213.9px;font-size:14.5px;letter-spacing:-0.07px;color:#000;">982 770</div><div class="t" style="left:29.0px;top:234.9px;font-size:14.5px;color:#000"><span style="letter-spacing:-0.16px">Кроссовки</span><span style="letter-spacing:2.93px"> </span><span style="letter-spacing:-0.01px">беговые,</span><span style="letter-spacing:2.37px"> </span><span style="letter-spacing:-1.15px">размер</span></div><div class="t" style="left:451.7px;top:234.9px;font-size:14.5px;letter-spacing:-0.07px;color:#000;">Бег</div><div class="t" style="left:592.3px;top:234.9px;font-size:14.5px;letter-spacing:-0.07px;color:#000;">334</div><div class="t" style="left:681.0px;top:234.9px;font-size:14.5px;letter-spacing:-0.07px;color:#000;">6 990</div><div class="t" style="left:733.9px;top:234.9px;font-size:14.5px;letter-spacing:-0.06px;color:#000;">2 334 660</div><div class="t" style="left:29.0px;top:255.9px;font-size:14.5px;color:#000"><span style="letter-spacing:-0.16px">Кроссовки</span><span style="letter-spacing:2.93px"> </span><span style="letter-spacing:-0.01px">беговые,</span><span style="letter-spacing:2.37px"> </span><span style="letter-spacing:-1.15px">размер</span></div><div class="t" style="left:451.7px;top:255.9px;font-size:14.5px;letter-spacing:-0.07px;color:#000;">Бег</div><div class="t" style="left:592.3px;top:255.9px;font-size:14.5px;letter-spacing:-0.07px;color:#000;">222</div><div class="t" style="left:681.0px;top:255.9px;font-size:14.5px;letter-spacing:-0.07px;color:#000;">6 990</div><div class="t" style="left:733.9px;top:255.9px;font-size:14.5px;letter-spacing:-0.06px;color:#000;">1 551 780</div><div class="t" style="left:29.0px;top:276.9px;font-size:14.5px;color:#000"><span style="letter-spacing:-0.16px">Кроссовки</span><span style="letter-spacing:2.93px"> </span><span style="letter-spacing:-0.01px">беговые,</span><span style="letter-spacing:2.37px"> </span><span style="letter-spacing:-1.15px">размер</span></div><div class="t" style="left:451.7px;top:276.9px;font-size:14.5px;letter-spacing:-0.07px;color:#000;">Бег</div><div class="t" style="left:592.3px;top:276.9px;font-size:14.5px;letter-spacing:-0.07px;color:#000;">221</div><div class="t" style="left:681.0px;top:276.9px;font-size:14.5px;letter-spacing:-0.07px;color:#000;">6 990</div><div class="t" style="left:733.9px;top:276.9px;font-size:14.5px;letter-spacing:-0.06px;color:#000;">1 544 790</div><div class="t" style="left:29.0px;top:297.9px;font-size:14.5px;color:#000"><span style="letter-spacing:-0.16px">Кроссовки</span><span style="letter-spacing:2.33px"> </span><span style="letter-spacing:0.15px">теннисные,</span><span style="letter-spacing:2.64px"> </span><span style="letter-spacing:-1.15px">размер</span></div><div class="t" style="left:439.5px;top:297.9px;font-size:14.5px;letter-spacing:-0.07px;color:#000;">Теннис</div><div class="t" style="left:592.3px;top:297.9px;font-size:14.5px;letter-spacing:-0.07px;color:#000;">443</div><div class="t" style="left:681.0px;top:297.9px;font-size:14.5px;letter-spacing:-0.07px;color:#000;">7 990</div><div class="t" style="left:733.9px;top:297.9px;font-size:14.5px;letter-spacing:-0.06px;color:#000;">3 539 570</div><div class="t" style="left:29.0px;top:319.0px;font-size:14.5px;color:#000"><span style="letter-spacing:-0.16px">Кроссовки</span><span style="letter-spacing:2.93px"> </span><span style="letter-spacing:-0.01px">беговые,</span><span style="letter-spacing:2.37px"> </span><span style="letter-spacing:-1.15px">размер</span></div><div class="t" style="left:451.7px;top:319.0px;font-size:14.5px;letter-spacing:-0.07px;color:#000;">Бег</div><div class="t" style="left:592.3px;top:319.0px;font-size:14.5px;letter-spacing:-0.07px;color:#000;">241</div><div class="t" style="left:681.0px;top:319.0px;font-size:14.5px;letter-spacing:-0.07px;color:#000;">6 490</div><div class="t" style="left:733.9px;top:319.0px;font-size:14.5px;letter-spacing:-0.06px;color:#000;">1 564 090</div><div class="t" style="left:29.0px;top:340.0px;font-size:14.5px;color:#000"><span style="letter-spacing:-0.16px">Кроссовки</span><span style="letter-spacing:2.33px"> </span><span style="letter-spacing:0.15px">теннисные,</span><span style="letter-spacing:2.64px"> </span><span style="letter-spacing:-1.15px">размер</span></div><div class="t" style="left:439.5px;top:340.0px;font-size:14.5px;letter-spacing:-0.07px;color:#000;">Теннис</div><div class="t" style="left:592.3px;top:340.0px;font-size:14.5px;letter-spacing:-0.07px;color:#000;">543</div><div class="t" style="left:681.0px;top:340.0px;font-size:14.5px;letter-spacing:-0.07px;color:#000;">7 990</div><div class="t" style="left:733.9px;top:340.0px;font-size:14.5px;letter-spacing:-0.06px;color:#000;">4 338 570</div><div class="t" style="left:29.0px;top:361.0px;font-size:14.5px;color:#000"><span style="letter-spacing:-0.16px">Кроссовки</span><span style="letter-spacing:2.93px"> </span><span style="letter-spacing:-0.01px">беговые,</span><span style="letter-spacing:2.37px"> </span><span style="letter-spacing:-1.15px">размер</span></div><div class="t" style="left:451.7px;top:361.0px;font-size:14.5px;letter-spacing:-0.07px;color:#000;">Бег</div><div class="t" style="left:592.3px;top:361.0px;font-size:14.5px;letter-spacing:-0.07px;color:#000;">332</div><div class="t" style="left:681.0px;top:361.0px;font-size:14.5px;letter-spacing:-0.07px;color:#000;">6 490</div><div class="t" style="left:733.9px;top:361.0px;font-size:14.5px;letter-spacing:-0.06px;color:#000;">2 154 680</div><div class="t" style="left:29.0px;top:382.0px;font-size:14.5px;color:#000"><span style="letter-spacing:-0.16px">Кроссовки</span><span style="letter-spacing:2.93px"> </span><span style="letter-spacing:-0.01px">беговые,</span><span style="letter-spacing:2.37px"> </span><span style="letter-spacing:-1.15px">размер</span></div><div class="t" style="left:451.7px;top:382.0px;font-size:14.5px;letter-spacing:-0.07px;color:#000;">Бег</div><div class="t" style="left:592.3px;top:382.0px;font-size:14.5px;letter-spacing:-0.07px;color:#000;">333</div><div class="t" style="left:681.0px;top:382.0px;font-size:14.5px;letter-spacing:-0.07px;color:#000;">6 490</div><div class="t" style="left:733.9px;top:382.0px;font-size:14.5px;letter-spacing:-0.06px;color:#000;">2 161 170</div><div class="t" style="left:29.0px;top:403.0px;font-size:14.5px;color:#000"><span style="letter-spacing:-0.16px">Кроссовки</span><span style="letter-spacing:2.93px"> </span><span style="letter-spacing:-0.01px">беговые,</span><span style="letter-spacing:2.37px"> </span><span style="letter-spacing:-1.15px">размер</span></div><div class="t" style="left:451.7px;top:403.0px;font-size:14.5px;letter-spacing:-0.07px;color:#000;">Бег</div><div class="t" style="left:592.3px;top:403.0px;font-size:14.5px;letter-spacing:-0.07px;color:#000;">421</div><div class="t" style="left:681.0px;top:403.0px;font-size:14.5px;letter-spacing:-0.07px;color:#000;">6 490</div><div class="t" style="left:733.9px;top:403.0px;font-size:14.5px;letter-spacing:-0.06px;color:#000;">2 732 290</div><div class="t" style="left:29.0px;top:424.0px;font-size:14.5px;color:#000"><span style="letter-spacing:-0.16px">Кроссовки</span><span style="letter-spacing:2.93px"> </span><span style="letter-spacing:-0.01px">беговые,</span><span style="letter-spacing:2.37px"> </span><span style="letter-spacing:-1.15px">размер</span></div><div class="t" style="left:451.7px;top:424.0px;font-size:14.5px;letter-spacing:-0.07px;color:#000;">Бег</div><div class="t" style="left:592.3px;top:424.0px;font-size:14.5px;letter-spacing:-0.07px;color:#000;">220</div><div class="t" style="left:681.0px;top:424.0px;font-size:14.5px;letter-spacing:-0.07px;color:#000;">6 990</div><div class="t" style="left:733.9px;top:424.0px;font-size:14.5px;letter-spacing:-0.06px;color:#000;">1 537 800</div><div class="t" style="left:29.0px;top:445.0px;font-size:14.5px;color:#000"><span style="letter-spacing:-0.16px">Кроссовки</span><span style="letter-spacing:2.33px"> </span><span style="letter-spacing:0.15px">теннисные,</span><span style="letter-spacing:2.64px"> </span><span style="letter-spacing:-1.15px">размер</span></div><div class="t" style="left:439.5px;top:445.0px;font-size:14.5px;letter-spacing:-0.07px;color:#000;">Теннис</div><div class="t" style="left:592.3px;top:445.0px;font-size:14.5px;letter-spacing:-0.07px;color:#000;">554</div><div class="t" style="left:681.0px;top:445.0px;font-size:14.5px;letter-spacing:-0.07px;color:#000;">7 990</div><div class="t" style="left:733.9px;top:445.0px;font-size:14.5px;letter-spacing:-0.06px;color:#000;">4 426 460</div><div class="t" style="left:29.0px;top:466.0px;font-size:14.5px;color:#000"><span style="letter-spacing:-0.16px">Кроссовки</span><span style="letter-spacing:2.93px"> </span><span style="letter-spacing:-0.01px">беговые,</span><span style="letter-spacing:2.37px"> </span><span style="letter-spacing:-1.15px">размер</span></div><div class="t" style="left:451.7px;top:466.0px;font-size:14.5px;letter-spacing:-0.07px;color:#000;">Бег</div><div class="t" style="left:592.3px;top:466.0px;font-size:14.5px;letter-spacing:-0.07px;color:#000;">125</div><div class="t" style="left:681.0px;top:466.0px;font-size:14.5px;letter-spacing:-0.07px;color:#000;">3 990</div><div class="t" style="left:745.9px;top:466.0px;font-size:14.5px;letter-spacing:-0.07px;color:#000;">498 750</div><div class="a" style="left:24px;top:19px;width:291px;height:24px;border:2px solid #1e7145"></div><div class="a" style="left:26px;top:21px;width:287px;height:20px;border:1px solid #fff"></div></div>
<div class="a" style="left:1009px;top:221px;width:1px;height:454px;background:#ababab"></div><div class="a" style="left:1px;top:674px;width:1009px;height:1px;background:#ababab"></div><div class="a" style="left:1013px;top:203px;width:14px;height:471px;background:#dce0e0"></div><div class="a" style="left:1013px;top:203px;width:14px;height:15px;background:#fff;border:1px solid #c2c2c2"></div><svg style="left:1016.5px;top:208px" width="7" height="4" viewBox="0 0 7 4"><path d="M0 4l3.500-4 3.500 4z" fill="#666"/></svg><div class="a" style="left:1013px;top:219px;width:14px;height:272px;background:#fff;border:1px solid #c2c2c2"></div><div class="a" style="left:1013px;top:661px;width:14px;height:14px;background:#fff;border:1px solid #c2c2c2"></div><svg style="left:1016.5px;top:666px" width="7" height="4" viewBox="0 0 7 4"><path d="M0 0h7l-3.500 4z" fill="#666"/></svg><svg style="left:25.5px;top:683.5px" width="4" height="8" viewBox="0 0 4 8"><path d="M4 0v8l-4-4z" fill="#c3c3c3"/></svg><svg style="left:54px;top:683.5px" width="4" height="8" viewBox="0 0 4 8"><path d="M0 0v8l4-4z" fill="#c3c3c3"/></svg><div class="a" style="left:98px;top:678px;width:1px;height:20px;background:#a0a0a0"></div><div class="t" style="left:113.0px;top:681.8px;font-size:13.5px;letter-spacing:-0.25px;color:#444;">microexcel.ru</div><div class="a" style="left:205px;top:675px;width:60px;height:24px;background:#fff;border-bottom:2px solid #1e7145;border-left:1px solid #d0d0d0;border-right:1px solid #d0d0d0"></div><div class="t" style="left:217.3px;top:681.8px;font-size:13.5px;letter-spacing:-0.82px;color:#1e7145;font-weight:bold;">Лист1</div><svg style="left:298px;top:680px" width="16" height="16" viewBox="0 0 16 16"><circle cx="8" cy="8" r="7.300" fill="none" stroke="#777" stroke-width="1"/><path d="M8 4v8 M4 8h8" stroke="#555" stroke-width="1.800"/></svg><div class="a" style="left:618px;top:682px;width:2px;height:2px;background:#b8b8b8"></div><div class="a" style="left:618px;top:686px;width:2px;height:2px;background:#b8b8b8"></div><div class="a" style="left:618px;top:690px;width:2px;height:2px;background:#b8b8b8"></div><div class="a" style="left:636px;top:681px;width:376px;height:15px;background:#dce0e0"></div><div class="a" style="left:636px;top:681px;width:14px;height:15px;background:#fff;border:1px solid #c2c2c2"></div><svg style="left:640.5px;top:685px" width="4" height="7" viewBox="0 0 4 7"><path d="M4 0v7l-4-3.500z" fill="#555"/></svg><div class="a" style="left:650px;top:681px;width:301px;height:15px;background:#fff;border:1px solid #c2c2c2"></div><div class="a" style="left:997px;top:681px;width:15px;height:15px;background:#fff;border:1px solid #c2c2c2"></div><svg style="left:1002.5px;top:685px" width="4" height="7" viewBox="0 0 4 7"><path d="M0 0v7l4-3.500z" fill="#555"/></svg><div class="a" style="left:1px;top:702px;width:1026px;height:1px;background:#c6c6c6"></div><div class="a" style="left:1px;top:703px;width:1026px;height:18px;background:#f3f3f3"></div><div class="a" style="left:0;top:721px;width:1028px;height:1px;background:#c9c3c3"></div><div class="a" style="left:1027px;top:0;width:1px;height:722px;background:#c9c3c3"></div><svg style="left:6px;top:706px" width="14" height="13" viewBox="0 0 14 13"><path d="M1.700 7v5.500h11v-11h-5.500" fill="#fff" stroke="#555" stroke-width="1.100"/><path d="M7.200 1.500h5.500v2h-5.500z" fill="#555"/><path d="M6 6.500h2 M9 6.500h2 M3 8.500h2 M6 8.500h2 M9 8.500h2 M3 10.500h2 M6 10.500h2 M9 10.500h2" stroke="#555" stroke-width="1"/><circle cx="2.900" cy="2.900" r="2.900" fill="#606060"/></svg><div class="a" style="left:731px;top:703px;width:38px;height:18px;background:#c9c9c9"></div><svg style="left:743px;top:706px" width="14" height="13" viewBox="0 0 14 13"><path d="M.500 .500h13v12h-13z M.500 4.500h13 M.500 8.500h13 M4.500 .500v12 M9 .500v12" fill="none" stroke="#555"/></svg><svg style="left:781px;top:706px" width="14" height="13" viewBox="0 0 14 13"><path d="M.500 .500h13v12h-13z" fill="none" stroke="#555"/><path d="M3.500 3.500h7v7h-7z M5 5.500h4 M5 7.500h4" fill="none" stroke="#555"/></svg><svg style="left:819px;top:706px" width="14" height="13" viewBox="0 0 14 13"><path d="M.500 .500h13v12h-13z M.500 7.500h13 M4.500 .500v7 M8.500 .500v7" fill="none" stroke="#555"/></svg><div class="a" style="left:850px;top:712px;width:6px;height:2px;background:#555"></div><div class="a" style="left:860px;top:712.500px;width:100px;height:1px;background:#9a9a9a"></div><div class="a" style="left:908px;top:707px;width:5px;height:11px;background:#666"></div><div class="a" style="left:964px;top:712px;width:8px;height:2px;background:#555"></div><div class="a" style="left:967px;top:709px;width:2px;height:8px;background:#555"></div><div class="t" style="left:982.7px;top:707.2px;font-size:11.5px;letter-spacing:-0.72px;color:#333;">100 %</div>
<svg style="left:0px;top:0px" width="1028" height="722" viewBox="0 0 1028 722"><polygon points="162.7,233.4 124.9,244.4 140.7,252.3 86.7,310 91.3,314.4 145.3,256.7 154.6,271" fill="#ff0000"/></svg><div class="a" style="left:195px;top:160px;width:262px;height:56px;background:#fff;border:1px solid #cdcdcd;box-shadow:0 1px 3px rgba(0,0,0,.18)"></div><div class="box" style="left:199px;top:164px;width:64px;height:24px;border-color:#c6c6c6"></div><div class="box" style="left:262px;top:164px;width:47px;height:24px;border-color:#c6c6c6"></div><div class="t" style="left:202.6px;top:169.1px;font-size:12.5px;letter-spacing:-0.28px;color:#333;">Calibri</div><svg style="left:253px;top:174px" width="5" height="3"><path d="M0 0h5l-2.5 3z" fill="#555"/></svg><div class="t" style="left:266.6px;top:169.1px;font-size:12.5px;letter-spacing:-1.20px;color:#333;">12</div><svg style="left:299px;top:174px" width="5" height="3"><path d="M0 0h5l-2.5 3z" fill="#555"/></svg><svg style="left:0px;top:0px" width="1" height="1" viewBox="0 0 1 1"><text x="315.6" y="181.2" font-size="12.5" fill="#444" font-family="Liberation Sans,sans-serif">A</text><path d="M323.4 172l2.500-3 2.500 3z" fill="#1e74c4"/></svg><svg style="left:0px;top:0px" width="1" height="1" viewBox="0 0 1 1"><text x="337.9" y="181.9" font-size="11" fill="#444" font-family="Liberation Sans,sans-serif">A</text><path d="M345 169h5l-2.500 3z" fill="#1e74c4"/></svg><svg style="left:356px;top:168px" width="17" height="17" viewBox="0 0 17 17"><rect x="1" y="1" width="14" height="8" fill="#fff" stroke="#1e74c4" stroke-width="1.600"/><circle cx="8" cy="5" r="2" fill="#1e74c4"/><rect x="0" y="0" width="2.500" height="2.500" fill="#1e74c4"/><rect x="13.500" y="0" width="2.500" height="2.500" fill="#1e74c4"/><rect x="0" y="7.500" width="2.500" height="2.500" fill="#1e74c4"/><g fill="#f7b23b" stroke="#fff" stroke-width=".600"><ellipse cx="12.500" cy="11" rx="3.800" ry="1.500"/><ellipse cx="12.500" cy="9" rx="3.800" ry="1.500"/><ellipse cx="12.500" cy="7" rx="3.800" ry="1.500"/><ellipse cx="8" cy="15" rx="3.800" ry="1.500"/><ellipse cx="8" cy="13" rx="3.800" ry="1.500"/></g></svg><svg style="left:378px;top:174px" width="5" height="3"><path d="M0 0h5l-2.5 3z" fill="#555"/></svg><div class="t" style="left:391.5px;top:169.0px;font-size:15px;color:#444;">%</div><div class="t" style="left:412.8px;top:171.1px;font-size:8.8px;letter-spacing:-0.06px;color:#444;">000</div><svg style="left:434px;top:168px" width="16" height="16" viewBox="0 0 16 16"><path d="M.500 .500h14v14h-14z" fill="#fff" stroke="#666"/><path d="M.500 3.500h14 M.500 11.500h14 M7.500 .500v3 M7.500 11.500v3" fill="none" stroke="#666"/><path d="M2.500 7.500h10 M4.500 5.500l-2 2 2 2 M10.500 5.500l2 2-2 2" fill="none" stroke="#1e74c4" stroke-width="1.100"/></svg><div class="a" style="left:199px;top:188px;width:22px;height:24px;background:#c6c6c6"></div><div class="t" style="left:203.2px;top:193.3px;font-size:13px;color:#444;font-weight:bold;">Ж</div><div class="t" style="left:227.0px;top:193.3px;font-size:13px;color:#444;font-weight:bold;font-style:italic;">К</div><svg style="left:247px;top:195.5px" width="14" height="12" viewBox="0 0 14 12"><rect x="0" y="0" width="14" height="1" fill="#555"/><rect x="2" y="3" width="10" height="1" fill="#555"/><rect x="0" y="6" width="14" height="1" fill="#555"/><rect x="2" y="9" width="10" height="1" fill="#555"/></svg><svg style="left:268.3px;top:191.5px" width="16" height="17" viewBox="0 0 16 17"><path d="M4.500 3.500l-3.500 4.500 5 5 6-5.500-5.500-5.500" fill="#fff" stroke="#555"/><path d="M4.500 4v-2a1.500 1.500 0 0 1 3 0v3" fill="none" stroke="#555"/><path d="M12 7.500c1.500 1.500 2.500 3 2.500 4a1.300 1.300 0 0 1-2.600 0c0-1 .100-2.500.100-4z" fill="#1e74c4"/><rect x="0" y="13" width="16" height="3.500" fill="#ffe57e"/></svg><svg style="left:290px;top:198px" width="5" height="3"><path d="M0 0h5l-2.5 3z" fill="#555"/></svg><div class="t" style="left:305.0px;top:190.5px;font-size:14px;color:#444;">A</div><div class="a" style="left:302px;top:204px;width:16px;height:3.500px;background:#ff0000"></div><svg style="left:324px;top:198px" width="5" height="3"><path d="M0 0h5l-2.5 3z" fill="#555"/></svg><svg style="left:337px;top:193px" width="13" height="13" viewBox="0 0 13 13"><path d="M0 .500h13 M0 6.500h13 M.500 0v12 M6.500 0v12 M12.500 0v12" fill="none" stroke="#666" stroke-dasharray="1 1"/><path d="M0 12.500h13" stroke="#555"/></svg><svg style="left:358px;top:198px" width="5" height="3"><path d="M0 0h5l-2.5 3z" fill="#555"/></svg><svg style="left:370.3px;top:193px" width="15" height="14" viewBox="0 0 15 14"><text x="9.500" y="5.800" font-size="8.600" letter-spacing="-.35" fill="#222" font-family="Liberation Sans,sans-serif">0</text><text x="1.500" y="12.400" font-size="8.600" letter-spacing="-.35" fill="#222" font-family="Liberation Sans,sans-serif">,00</text><path d="M7 3h-6 M3.500 .500l-2.500 2.500 2.500 2.500" fill="none" stroke="#1e74c4" stroke-width="1.300"/></svg><svg style="left:392px;top:193px" width="15" height="14" viewBox="0 0 15 14"><text x="4" y="5.800" font-size="8.600" letter-spacing="-.35" fill="#222" font-family="Liberation Sans,sans-serif">,00</text><text x="7.500" y="12.400" font-size="8.600" letter-spacing="-.35" fill="#222" font-family="Liberation Sans,sans-serif">,0</text><path d="M0 9.500h6 M3.500 7l2.500 2.500-2.500 2.500" fill="none" stroke="#1e74c4" stroke-width="1.300"/></svg><svg style="left:414.5px;top:192.5px" width="17" height="15" viewBox="0 0 17 15"><path d="M10 4.500l3.500-3.500 2.500 2.500-3.500 3.500z" fill="#555"/><path d="M8 4.500l4.500 4.500-1.500 1.500-4.500-4.500z" fill="#777"/><path d="M6 6.500l4.500 4.500-4 3.500-5.500-3z" fill="#f2c24e"/></svg><div class="a" style="left:195px;top:231px;width:278px;height:452px;background:#fff;border:1px solid #c6c6c6;box-shadow:1px 2px 4px rgba(0,0,0,.22)"></div><svg style="left:201.5px;top:237px" width="15" height="15" viewBox="0 0 15 15"><path d="M3.800 .300l6 9.500 M11.200 .300l-6 9.500" stroke="#555" stroke-width="1.900" fill="none"/><circle cx="3.300" cy="11.800" r="2.300" fill="none" stroke="#1e74c4" stroke-width="1.200"/><circle cx="11.700" cy="11.800" r="2.300" fill="none" stroke="#1e74c4" stroke-width="1.200"/></svg><div class="t" style="left:229.5px;top:239.0px;font-size:12px;letter-spacing:-0.42px;color:#444;">В<u>ы</u>резать</div><svg style="left:201px;top:262px" width="16" height="14" viewBox="0 0 16 14"><path d="M.500 .500h5.500l2 2v7h-7.500z" fill="#fff" stroke="#555"/><path d="M2 3.500h3 M2 5.500h3" stroke="#555"/><path d="M6.500 3.500h5.500l2.500 2.500v7.500h-8z" fill="#fff" stroke="#555"/><path d="M8.500 7.500h4 M8.500 9.500h4 M8.500 11.500h4" stroke="#1e74c4"/></svg><div class="t" style="left:229.5px;top:263.0px;font-size:12px;letter-spacing:-0.06px;color:#444;"><u>К</u>опировать</div><div class="a" style="left:221px;top:281px;width:250px;height:22px;background:#e6e6e6"></div><svg style="left:202.3px;top:284.4px" width="14.7" height="16.1" viewBox="0 0 21 23"><path d="M0 3.300h18v17.500H0z" fill="#d6dede"/><path d="M4 2h3a2 2 0 0 1 4 0h3v3.300h-10z" fill="#b9bcbc"/><path d="M10.500 10.500h6.500l3.500 3.500v8.500h-10z" fill="#fbfbfb" stroke="#b4b4b4"/><path d="M17 10.500v3.500h3.500" fill="none" stroke="#b4b4b4"/></svg><div class="t" style="left:230.4px;top:286.0px;font-size:12px;letter-spacing:-0.25px;color:#505050;font-weight:bold;">Параметры вставки:</div><svg style="left:227px;top:307px" width="21" height="23" viewBox="0 0 21 23"><path d="M0 3.300h18v17.500H0z" fill="#d6dede"/><path d="M4 2h3a2 2 0 0 1 4 0h3v3.300h-10z" fill="#b9bcbc"/><path d="M10.500 10.500h6.500l3.500 3.500v8.500h-10z" fill="#fbfbfb" stroke="#b4b4b4"/><path d="M17 10.500v3.500h3.500" fill="none" stroke="#b4b4b4"/></svg><div class="t" style="left:229.5px;top:339.8px;font-size:12px;letter-spacing:-0.26px;color:#a6a6a6;">Специальная <u>в</u>ставка...</div><div class="a" style="left:229px;top:357px;width:242px;height:1px;background:#e1e1e1"></div><svg style="left:201px;top:363px" width="16" height="16" viewBox="0 0 16 16"><circle cx="10" cy="6" r="5" fill="none" stroke="#1e74c4" stroke-width="1.500"/><path d="M6 10l-5.500 5.500" stroke="#1e74c4" stroke-width="2"/><path d="M10 5.500v3.500" stroke="#444" stroke-width="1.500"/><circle cx="10" cy="3.300" r=".900" fill="#444"/></svg><div class="t" style="left:229.5px;top:365.0px;font-size:12px;letter-spacing:0.01px;color:#444;"><u>И</u>нтеллектуальный поиск</div><div class="a" style="left:194px;top:382px;width:278px;height:29px;background:#c8c8c8;border:3px solid #ff0000;border-radius:8px"></div><div class="t" style="left:229.5px;top:390.5px;font-size:12px;letter-spacing:-0.40px;color:#333;">Встав<u>и</u>ть...</div><div class="t" style="left:229.5px;top:414.5px;font-size:12px;letter-spacing:-0.36px;color:#444;"><u>У</u>далить...</div><div class="t" style="left:229.5px;top:438.5px;font-size:12px;letter-spacing:-0.04px;color:#444;">Очистить содер<u>ж</u>имое</div><div class="a" style="left:229px;top:457px;width:242px;height:1px;background:#e1e1e1"></div><svg style="left:201px;top:463px" width="17" height="17" viewBox="0 0 17 17"><path d="M0 1.200h6.500l-3.250 2.900z M0 7h6.500l-3.250-2.900z" fill="#1e90e8"/><text x="-.300" y="15.800" font-size="11" font-weight="bold" fill="#1e90e8" font-family="Liberation Sans,sans-serif">a</text><text x="7.300" y="8.300" font-size="9.500" font-weight="bold" fill="#1e7e34" font-family="Noto Sans CJK JP,Liberation Sans,sans-serif">あ</text><path d="M8.500 15.500l3.500-5 1.500 2 2.500-2.500v6.500h-5z" fill="#1e7e34"/></svg><div class="t" style="left:229.5px;top:464.5px;font-size:12px;letter-spacing:-0.27px;color:#444;">Перевести</div><div class="a" style="left:229px;top:483px;width:242px;height:1px;background:#e1e1e1"></div><svg style="left:201px;top:489px" width="16" height="15" viewBox="0 0 16 15"><path d="M7.500 1.800h7v12h-12.500v-3.500" fill="none" stroke="#666" stroke-width="1.400"/><path d="M6.500 6.300h3.500" stroke="#e8261b" stroke-width="1.300"/><path d="M5.500 9h8" stroke="#1e5fb4" stroke-width="1.500"/><path d="M5.500 11.800h6" stroke="#4fae98" stroke-width="1.400"/><path d="M4 0h3l-2.500 4.500h2l-5.500 6.500 2-5h-2.500z" fill="#f7b84b"/></svg><div class="t" style="left:229.5px;top:491.0px;font-size:12px;letter-spacing:-0.14px;color:#444;">Экспресс-анали<u>з</u></div><div class="t" style="left:229.5px;top:515.0px;font-size:12px;letter-spacing:-0.05px;color:#444;"><u>Ф</u>ильтр</div><svg style="left:458px;top:517.5px" width="5" height="8" viewBox="0 0 5 8"><path d="M0 0v8l4.500-4z" fill="#777"/></svg><div class="t" style="left:229.5px;top:539.0px;font-size:12px;letter-spacing:-0.04px;color:#444;"><u>С</u>ортировка</div><svg style="left:458px;top:541.5px" width="5" height="8" viewBox="0 0 5 8"><path d="M0 0v8l4.500-4z" fill="#777"/></svg><div class="a" style="left:229px;top:557px;width:242px;height:1px;background:#e1e1e1"></div><svg style="left:201px;top:563px" width="16" height="15" viewBox="0 0 16 15"><path d="M7 1.700h7a1.300 1.300 0 0 1 1.300 1.300v6a1.300 1.300 0 0 1-1.300 1.300h-6.500l-3.300 3.700v-3.700h-1a1.300 1.300 0 0 1-1.300-1.300v-2" fill="none" stroke="#666" stroke-width="1.300"/><path d="M3 0v6 M0 3h6" stroke="#3aa693" stroke-width="2"/></svg><div class="t" style="left:229.5px;top:565.0px;font-size:12px;letter-spacing:-0.12px;color:#444;">Вставить приме<u>ч</u>ание</div><div class="a" style="left:229px;top:583px;width:242px;height:1px;background:#e1e1e1"></div><svg style="left:202px;top:589px" width="14" height="16" viewBox="0 0 14 16"><rect x=".500" y=".500" width="13" height="15" fill="#fff" stroke="#555"/><rect x=".500" y=".500" width="13" height="3" fill="#1e74c4"/><circle cx="4" cy="7.500" r="1" fill="none" stroke="#555"/><circle cx="4" cy="11.500" r="1" fill="none" stroke="#555"/><path d="M7 7.500h4 M7 11.500h4" stroke="#555"/></svg><div class="t" style="left:229.5px;top:591.0px;font-size:12px;letter-spacing:-0.12px;color:#444;">Формат <u>я</u>чеек...</div><div class="t" style="left:229.5px;top:615.0px;font-size:12px;letter-spacing:-0.04px;color:#444;">Вы<u>б</u>рать из раскрывающегося списка...</div><div class="t" style="left:229.5px;top:638.7px;font-size:12px;letter-spacing:-0.07px;color:#444;">Присвоит<u>ь</u> имя...</div><svg style="left:201px;top:661px" width="17" height="17" viewBox="0 0 17 17"><path d="M.500 8a5.500 5.500 0 0 1 11 0" fill="none" stroke="#555" stroke-width="1.100"/><path d="M3.500 8c0-4 1.500-7.500 2.500-7.500s2.500 3.500 2.500 7.500 M1 5h10 M.500 8h11" fill="none" stroke="#555" stroke-width=".900"/><rect x="1.800" y="9.700" width="8.600" height="5.800" rx="2.900" fill="#fff" stroke="#1565c0" stroke-width="1.700"/><rect x="7.600" y="9.700" width="8.600" height="5.800" rx="2.900" fill="none" stroke="#1565c0" stroke-width="1.700"/></svg><div class="t" style="left:229.5px;top:663.0px;font-size:12px;letter-spacing:-0.16px;color:#444;">С<u>с</u>ылка</div>
</body></html>
